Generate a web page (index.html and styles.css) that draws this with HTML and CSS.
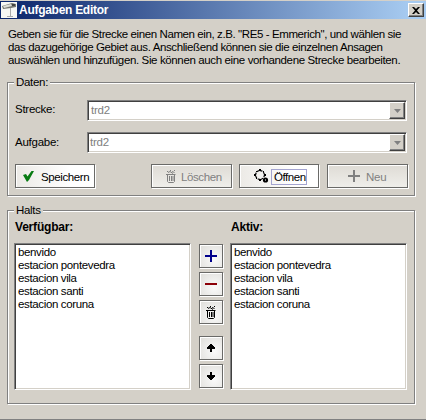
FILE: index.html
```
<!DOCTYPE html>
<html lang="de">
<head>
<meta charset="utf-8">
<title>Aufgaben Editor</title>
<link rel="stylesheet" href="styles.css">
</head>
<body>
<svg width="0" height="0" class="defs">
  <symbol id="trash" viewBox="0 0 10 13"><g fill="none" stroke="currentColor"><path d="M1.5 5V11.5L2.5 12.5H7.5L8.5 11.5V5M3.5 6V11M5.5 6V11M7 6V11M0 4.5H9.5M2 2.5L4 1.5L7 3.5M6 1.5L8.5 2.5M1 1.5H2M4 .5H5M8 .5H9" /></g></symbol>
</svg>
<main class="window">
  <header class="titlebar">
    <svg class="appicon" width="16" height="16" viewBox="0 0 16 16"><path fill="#f7f7f4" d="M0 0H16V16H0Z"/><path fill="#777771" d="M1 4L11 1L15 2V5L10 6L2 7Z"/><path fill="#deded7" d="M2 4L10 2L11 4L3 6Z"/><path fill="#444" d="M11 2H14V4H11Z"/><path stroke="#aaa" fill="none" d="M9.5 6V14M6 14.5H12"/></svg>
    <h1>Aufgaben Editor</h1>
    <button class="close" aria-label="Schließen"><svg width="8" height="7" viewBox="0 0 8 7"><path d="M0 0H2L4 2L6 0H8L5 3.5L8 7H6L4 5L2 7H0L3 3.5Z"/></svg></button>
  </header>
  <p class="intro"><span class="l1">Geben sie für die Strecke einen Namen ein, z.B. "RE5 - Emmerich", und wählen sie</span><br><span class="l2">das dazugehörige Gebiet aus. Anschließend können sie die einzelnen Ansagen</span><br><span class="l3">auswählen und hinzufügen. Sie können auch eine vorhandene Strecke bearbeiten.</span></p>

  <section class="group data">
    <h2>Daten:</h2>
    <div class="field"><label>Strecke:</label><div class="combo"><span>trd2</span><i><svg width="7" height="4" viewBox="0 0 7 4"><path d="M0 0H7L3.5 4Z"/></svg></i></div></div>
    <div class="field second"><label>Aufgabe:</label><div class="combo"><span>trd2</span><i><svg width="7" height="4" viewBox="0 0 7 4"><path d="M0 0H7L3.5 4Z"/></svg></i></div></div>
    <div class="actions">
      <button class="btn save"><svg width="11" height="11" viewBox="0 0 11 11"><path fill="#087b13" d="M0 4L3 3L4.5 5.5L8.5 0H11L6 9L4 11Z"/></svg><span>Speichern</span></button>
      <button class="btn delete off"><svg width="10" height="13"><use href="#trash"/></svg><span>Löschen</span></button>
      <button class="btn open"><svg width="15" height="14" viewBox="0 0 15 14"><circle cx="6" cy="6" r="4.4" fill="none" stroke="#000" stroke-width="1.2" stroke-dasharray="2.4 1"/><path d="M5 0H7V2H5ZM0 5H2V7H0ZM10 5H12V7H10ZM5 10H7V12H5ZM2 2H3V3H2ZM9 2H10V3H9ZM2 9H3V10H2Z"/><circle cx="11.5" cy="11" r="2.6"/><path fill="#fff" d="M11 10.5H12V11.5H11Z"/></svg><span>Öffnen</span></button>
      <button class="btn new off"><svg width="12" height="12" viewBox="0 0 12 12"><path fill="currentColor" d="M5 0H7V5H12V7H7V12H5V7H0V5H5Z"/></svg><span>Neu</span></button>
    </div>
  </section>

  <section class="group stops">
    <h2>Halts</h2>
    <div class="columns">
      <div class="column"><h3>Verfügbar:</h3>
        <ul><li>benvido</li><li>estacion pontevedra</li><li>estacion vila</li><li>estacion santi</li><li>estacion coruna</li></ul></div>
      <div class="tools">
        <button class="tool" aria-label="Hinzufügen"><svg width="12" height="12" viewBox="0 0 12 12"><path fill="#00008c" d="M5 0H7V5H12V7H7V12H5V7H0V5H5Z"/></svg></button>
        <button class="tool" aria-label="Entfernen"><svg width="12" height="2" viewBox="0 0 12 2"><path fill="#8c0008" d="M0 0H12V2H0Z"/></svg></button>
        <button class="tool" aria-label="Leeren"><svg width="10" height="13"><use href="#trash"/></svg></button>
        <button class="tool up" aria-label="Nach oben"><svg width="8" height="8" viewBox="0 0 8 8"><path d="M3 0H5V1H6V2H7V3H8V5H5V8H3V5H0V3H1V2H2V1H3Z"/></svg></button>
        <button class="tool" aria-label="Nach unten"><svg width="8" height="8" viewBox="0 0 8 8"><path d="M3 8H5V7H6V6H7V5H8V3H5V0H3V3H0V5H1V6H2V7H3Z"/></svg></button>
      </div>
      <div class="column"><h3>Aktiv:</h3>
        <ul><li>benvido</li><li>estacion pontevedra</li><li>estacion vila</li><li>estacion santi</li><li>estacion coruna</li></ul></div>
    </div>
  </section>
</main>
</body>
</html>
```
FILE: styles.css
```
* { box-sizing: border-box; }
body { margin: 0; overflow: hidden; font: 11.5px/13px "Liberation Sans", Arial, sans-serif; color: #000; background: #d4d0c8; }
.defs { position: absolute; }
.window { width: 426px; height: 420px; padding-top: 1px; border-bottom: 1px solid #808080; }
h1, h2, h3, p, ul { margin: 0; padding: 0; font-size: 11.5px; }
svg { display: block; flex: none; }
button { font: inherit; padding: 0; margin: 0; border-radius: 0; color: #000; }

.titlebar { display: flex; align-items: center; height: 18px; padding: 0 2px 0 1px; background: linear-gradient(90deg, #0a246a, #a6caf0 96%); }
.titlebar h1 { flex: 1; margin-left: 2px; font-size: 12px; color: #fff; letter-spacing: -.28px; }
.close { display: flex; align-items: center; justify-content: center; width: 16px; height: 14px; background: #d4d0c8; border: 1px solid; border-color: #fff #404040 #404040 #fff; box-shadow: inset -1px -1px #808080; }

.intro { margin: 9px 0 0 8px; white-space: nowrap; }
.l1 { letter-spacing: -.4px; }
.l2 { letter-spacing: -.39px; }
.l3 { letter-spacing: -.37px; }

.group { width: 408px; margin-left: 7px; border: 1px solid #808080; box-shadow: 1px 1px #fff, inset 1px 1px #fff; }
.group h2 { width: max-content; height: 13px; margin: -7px 0 0 6px; padding: 0 2px; font-weight: normal; letter-spacing: -.3px; background: #d4d0c8; }
.data { height: 114px; margin-top: 15px; }
.stops { height: 194px; margin-top: 14px; }

.field { display: flex; height: 21px; margin: 11px 0 0 7px; }
.field label { width: 72px; padding-top: 3px; letter-spacing: -.25px; }
.field.second label { padding-top: 4px; }
.combo { display: flex; justify-content: space-between; width: 320px; background: #fff; border: 1px solid; border-color: #808080 #fff #fff #808080; box-shadow: inset 1px 1px #404040, inset -1px -1px #d4d0c8; color: #808080; }
.combo span { padding: 3px 0 0 3px; letter-spacing: -.2px; }
.second .combo span { padding-left: 2px; }
.combo i { display: flex; align-items: center; justify-content: center; width: 16px; margin: 1px; background: #d4d0c8; border: 1px solid; border-color: #fff #404040 #404040 #fff; box-shadow: inset -1px -1px #808080; }
.combo path { fill: #808080; }

.actions { display: flex; margin: 11px 0 0 7px; }
.btn, .tool { display: flex; align-items: center; border: 1px solid #6a6a68; box-shadow: 1px 1px #fff, inset 1px 1px #fff; }
.btn { width: 80px; height: 24px; }
.btn svg { margin-left: 7px; }
.btn span { margin: 2px 0 0 7px; letter-spacing: -.4px; }
.save { background: linear-gradient(90deg, #eceae6, #fff 70%); }
.delete { margin-left: 56px; width: 81px; }
.delete svg { margin-left: 14px; }
.btn.delete span { margin-left: 5px; }
.open { margin-left: 7px; background: linear-gradient(90deg, #eceae6, #fff 70%); }
.open svg { margin-left: 14px; }
.btn.open span { width: 36px; margin: 1px 0 0 2px; padding: 1px 0 0 2px; border: 1px solid #a4a4d0; line-height: 13px; text-align: left; letter-spacing: -.45px; }
.new { margin-left: 8px; width: 81px; }
.new svg { margin-left: 20px; }
.btn.new span { margin-left: 6px; letter-spacing: -.2px; }
.off { color: #808080; background: linear-gradient(#dedbd5, #efeeea); }

.columns { display: flex; margin: 4px 0 0 7px; }
.column { width: 176px; }
.column h3 { height: 22px; font-size: 12px; letter-spacing: -.2px; }
.column ul { height: 147px; margin-left: -1px; padding: 2px 0 0 3px; list-style: none; background: #fff; border: 1px solid; border-color: #808080 #fff #fff #808080; box-shadow: inset 1px 1px #404040, inset -1px -1px #d4d0c8; }
.column li { height: 13px; letter-spacing: -.36px; }
.tools { display: flex; flex-direction: column; gap: 4px; width: 40px; padding: 23px 0 0 8px; }
.tool { justify-content: center; width: 24px; height: 24px; background: radial-gradient(circle at 65% 65%, #fafafa, #deddd9); }
.up { margin-top: 8px; }
```
